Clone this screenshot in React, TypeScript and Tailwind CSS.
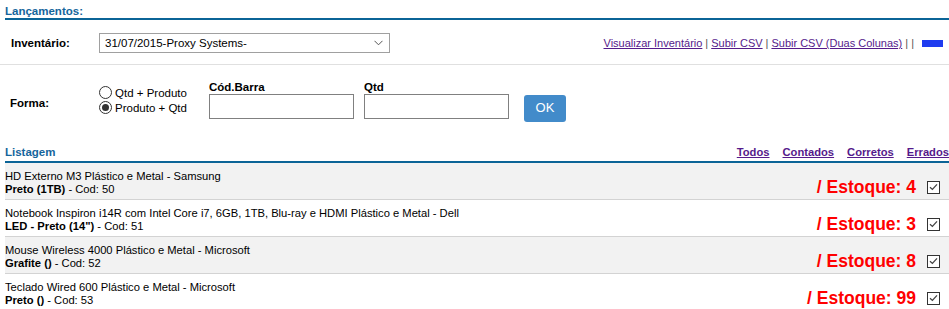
const items = [
  { name: "HD Externo M3 Plástico e Metal - Samsung", variant: "Preto (1TB)", cod: 50, stock: 4 },
  {
    name: "Notebook Inspiron i14R com Intel Core i7, 6GB, 1TB, Blu-ray e HDMI Plástico e Metal - Dell",
    variant: 'LED - Preto (14")',
    cod: 51,
    stock: 3,
  },
  { name: "Mouse Wireless 4000 Plástico e Metal - Microsoft", variant: "Grafite ()", cod: 52, stock: 8 },
  { name: "Teclado Wired 600 Plástico e Metal - Microsoft", variant: "Preto ()", cod: 53, stock: 99 },
];

function Radio({ checked, label }: { checked?: boolean; label: string }) {
  return (
    <label className="flex h-[15px] items-center gap-[3px]">
      <span className="flex h-[13px] w-[13px] items-center justify-center rounded-full border border-[#333] bg-white">
        {checked && <span className="h-[7px] w-[7px] rounded-full bg-[#333]" />}
      </span>
      {label}
    </label>
  );
}

function Check() {
  return (
    <span className="flex h-[13px] w-[13px] items-center justify-center border border-[#333] bg-white">
      <svg width="9" height="8" viewBox="0 0 9 8" fill="none">
        <path d="M1 4.2 3.4 6.4 8 1.4" stroke="#444" strokeWidth="1.3" />
      </svg>
    </span>
  );
}

export default function App() {
  return (
    <div className="h-[309px] w-[949px] overflow-hidden bg-white font-['Liberation_Sans',Arial,sans-serif] text-[11.2px] leading-[14px] text-black">
      {/* Lançamentos */}
      <div className="ml-[5px] h-[20px] border-b-2 border-[#0b6497] pt-[4px] text-[11.5px] font-bold text-[#15659c]">
        Lançamentos:
      </div>

      {/* Inventário */}
      <div className="flex h-[45px] items-center border-b border-[#e0e0e0] pl-[11px] pr-[6px] pt-[2px]">
        <span className="w-[88px] text-[11.5px] font-bold">Inventário:</span>
        <div className="flex h-[20px] w-[291px] items-center justify-between border border-[#a0a0a0] pl-[5px] pr-[6px] text-[11.5px]">
          <span>31/07/2015-Proxy Systems-</span>
          <svg width="9" height="6" viewBox="0 0 9 6" fill="none">
            <path d="M.5 .8 4.5 4.8 8.5 .8" stroke="#555" strokeWidth="1" />
          </svg>
        </div>
        <div className="ml-auto flex items-center gap-[3px] text-[11px] text-[#551a8b]">
          <a className="underline">Visualizar Inventário</a>
          <span className="text-[#555]">|</span>
          <a className="underline">Subir CSV</a>
          <span className="text-[#555]">|</span>
          <a className="underline">Subir CSV (Duas Colunas)</a>
          <span className="text-[#555]">|</span>
          <span className="text-[#555]">|</span>
          <span className="ml-[5px] h-[7px] w-[21px] bg-[#1f3cf0]" />
        </div>
      </div>

      {/* Forma */}
      <div className="flex h-[75px] items-center pl-[10px] text-[11.5px]">
        <span className="w-[89px] font-bold">Forma:</span>
        <div className="-mt-[5px] flex w-[110px] flex-col">
          <Radio label="Qtd + Produto" />
          <Radio checked label="Produto + Qtd" />
        </div>
        <div className="-mt-[6px] flex flex-col">
          <span className="font-bold">Cód.Barra</span>
          <span className="h-[25px] w-[145px] border border-[#808080]" />
        </div>
        <div className="-mt-[6px] ml-[10px] flex flex-col">
          <span className="font-bold">Qtd</span>
          <span className="h-[25px] w-[145px] border border-[#808080]" />
        </div>
        <button className="ml-[15px] mt-[11px] flex h-[27px] w-[42px] items-center justify-center rounded-[3px] bg-[#428bca] text-[13px] text-white">
          OK
        </button>
      </div>

      {/* Listagem */}
      <div className="ml-[5px] flex h-[23px] items-end border-b-2 border-[#0b6497] pb-[2px] font-bold">
        <span className="text-[11.5px] text-[#15659c]">Listagem</span>
        <div className="ml-auto flex gap-[13px] text-[#551a8b]">
          <a className="underline">Todos</a>
          <a className="underline">Contados</a>
          <a className="underline">Corretos</a>
          <a className="underline">Errados</a>
        </div>
      </div>

      {/* Rows */}
      <div className="ml-[5px]">
        {items.map((it, i) => (
          <div
            key={it.cod}
            className={`flex h-[37px] items-start border-b border-[#d3d3d3] pt-[7px] ${i % 2 === 0 ? "bg-[#f2f2f2]" : "bg-white"}`}
          >
            <div className="flex flex-col leading-[13px]">
              <span>{it.name}</span>
              <span>
                <b>{it.variant}</b> - Cod: {it.cod}
              </span>
            </div>
            <div className="ml-auto mr-[9px] mt-[10px] flex items-center gap-[11px]">
              <span className="text-[17.5px] font-bold text-[#ff0000]">/ Estoque: {it.stock}</span>
              <Check />
            </div>
          </div>
        ))}
      </div>
    </div>
  );
}
